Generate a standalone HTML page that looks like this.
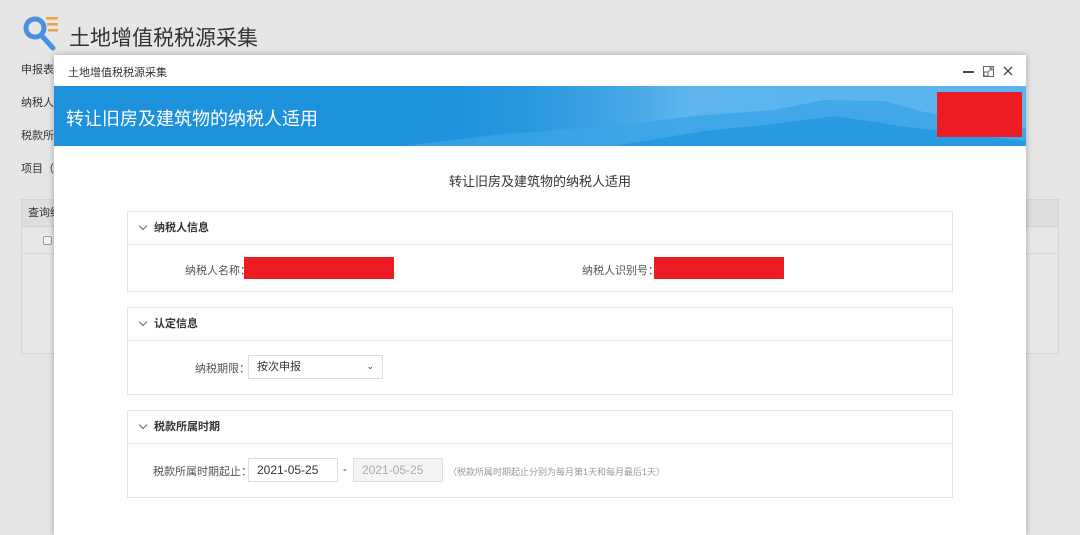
<!DOCTYPE html>
<html><head><meta charset="utf-8"><style>
*{margin:0;padding:0;box-sizing:border-box}
body{width:1080px;height:524px;overflow:hidden;background:#e6e6e6;font-family:"Liberation Sans","Noto Sans CJK SC",sans-serif;position:relative;color:#333}
.a{position:absolute}
.lbl{font-size:11px;color:#333}
.sec{position:absolute;left:127px;width:826px;border:1px solid #e4e4e4;background:#fff}
.sh{height:33px;border-bottom:1px solid #e8e8e8;font-size:11px;font-weight:bold;line-height:32px;padding-left:26px;position:relative;color:#333}
.sh:before{content:"";position:absolute;left:12px;top:11px;width:5px;height:5px;border-right:1px solid #666;border-bottom:1px solid #666;transform:rotate(45deg)}
.inp{position:absolute;border:1px solid #ddd;height:24px;font-size:11px;line-height:22px;padding-left:8px;background:#fff}
</style></head><body>
<svg class="a" style="left:22px;top:14px" width="38" height="40" viewBox="0 0 38 40">
<circle cx="13" cy="14" r="9" fill="none" stroke="#4a8fe0" stroke-width="5"/>
<line x1="19" y1="21" x2="31" y2="34" stroke="#4a8fe0" stroke-width="5" stroke-linecap="round"/>
<rect x="24" y="3" width="12" height="2.5" fill="#f0a040"/><rect x="25" y="9" width="11" height="2.5" fill="#f0a040"/><rect x="26" y="15" width="10" height="2.5" fill="#f0a040"/>
</svg>
<div class="a" style="left:69px;top:22px;font-size:21px;color:#333">土地增值税税源采集</div>
<div class="a lbl" style="left:21px;top:61px">申报表</div>
<div class="a lbl" style="left:21px;top:94px">纳税人</div>
<div class="a lbl" style="left:21px;top:127px">税款所</div>
<div class="a lbl" style="left:21px;top:160px">项目（</div>
<div class="a" style="left:21px;top:199px;width:1038px;height:155px;border:1px solid #d5d5d5;background:#e8e8e8"></div>
<div class="a" style="left:22px;top:200px;width:1036px;height:27px;background:#dedede;border-bottom:1px solid #d0d0d0;font-size:11px;line-height:27px;padding-left:6px">查询结</div>
<div class="a" style="left:22px;top:227px;width:1036px;height:27px;border-bottom:1px solid #d5d5d5"></div>
<div class="a" style="left:43px;top:236px;width:9px;height:9px;border:1px solid #999;border-radius:2px;background:#f4f4f4"></div>

<div class="a" style="left:54px;top:55px;width:972px;height:480px;background:#fff;box-shadow:0 0 6px rgba(0,0,0,.3)">
 <div class="a" style="left:14px;top:9px;font-size:11px;color:#333">土地增值税税源采集</div>
 <div class="a" style="left:909px;top:16px;width:11px;height:2px;background:#444"></div>
 <svg class="a" style="left:929px;top:11px" width="11" height="11" viewBox="0 0 11 11"><rect x="0.5" y="0.5" width="10" height="10" fill="none" stroke="#666"/><path d="M4 7L9 2M6 2H9V5" stroke="#666" fill="none"/><rect x="1" y="6" width="4" height="4" fill="#fff" stroke="#666"/></svg>
 <svg class="a" style="left:949px;top:11px" width="10" height="10" viewBox="0 0 10 10"><path d="M1 1L9 9M9 1L1 9" stroke="#444" stroke-width="1.3"/></svg>
 <div class="a" style="left:0;top:31px;width:972px;height:60px;background:#1e91dc;overflow:hidden">
  <svg class="a" style="left:0;top:0" width="972" height="60"><defs><linearGradient id="g" x1="0" x2="1"><stop offset="0" stop-color="#1e91dc" stop-opacity="0"/><stop offset="0.45" stop-color="#5db5ec"/><stop offset="1" stop-color="#5ab4ee"/></linearGradient></defs>
  <rect x="350" y="0" width="622" height="60" fill="url(#g)"/>
  <path d="M350 60 L450 48 L560 40 L640 30 L720 24 L770 14 L830 15 L870 26 L930 36 L972 42 L972 60Z" fill="#3aa5e6" opacity=".8"/>
  <path d="M560 60 L650 45 L720 38 L780 30 L860 42 L972 55 L972 60Z" fill="#1e94df" opacity=".7"/></svg>
  <div class="a" style="left:12px;top:19px;font-size:18px;color:#fff">转让旧房及建筑物的纳税人适用</div>
  <div class="a" style="left:883px;top:6px;width:85px;height:45px;background:#ed1c24"></div>
 </div>
 <div class="a" style="left:0;top:116px;width:972px;text-align:center;font-size:13px;color:#333">转让旧房及建筑物的纳税人适用</div>
</div>

<div class="sec" style="top:211px;height:81px"><div class="sh">纳税人信息</div>
 <div class="a lbl" style="left:57px;top:50px;color:#555">纳税人名称：</div>
 <div class="a" style="left:116px;top:45px;width:150px;height:22px;background:#ed1c24"></div>
 <div class="a lbl" style="left:454px;top:50px;color:#555">纳税人识别号：</div>
 <div class="a" style="left:526px;top:45px;width:130px;height:22px;background:#ed1c24"></div>
</div>
<div class="sec" style="top:307px;height:88px"><div class="sh">认定信息</div>
 <div class="a lbl" style="left:67px;top:52px;color:#555">纳税期限：</div>
 <div class="inp" style="left:120px;top:47px;width:135px">按次申报<span style="position:absolute;right:8px;top:-1px;font-size:9px">&#8964;</span></div>
</div>
<div class="sec" style="top:410px;height:88px"><div class="sh">税款所属时期</div>
 <div class="a lbl" style="left:25px;top:52px;color:#555">税款所属时期起止：</div>
 <div class="inp" style="left:120px;top:47px;width:90px;font-size:12px">2021-05-25</div>
 <div class="a lbl" style="left:215px;top:53px">-</div>
 <div class="inp" style="left:225px;top:47px;width:90px;background:#f4f4f4;color:#aaa;font-size:12px">2021-05-25</div>
 <div class="a" style="left:320px;top:54px;font-size:9px;color:#999">（税款所属时期起止分别为每月第1天和每月最后1天）</div>
</div>
</body></html>
